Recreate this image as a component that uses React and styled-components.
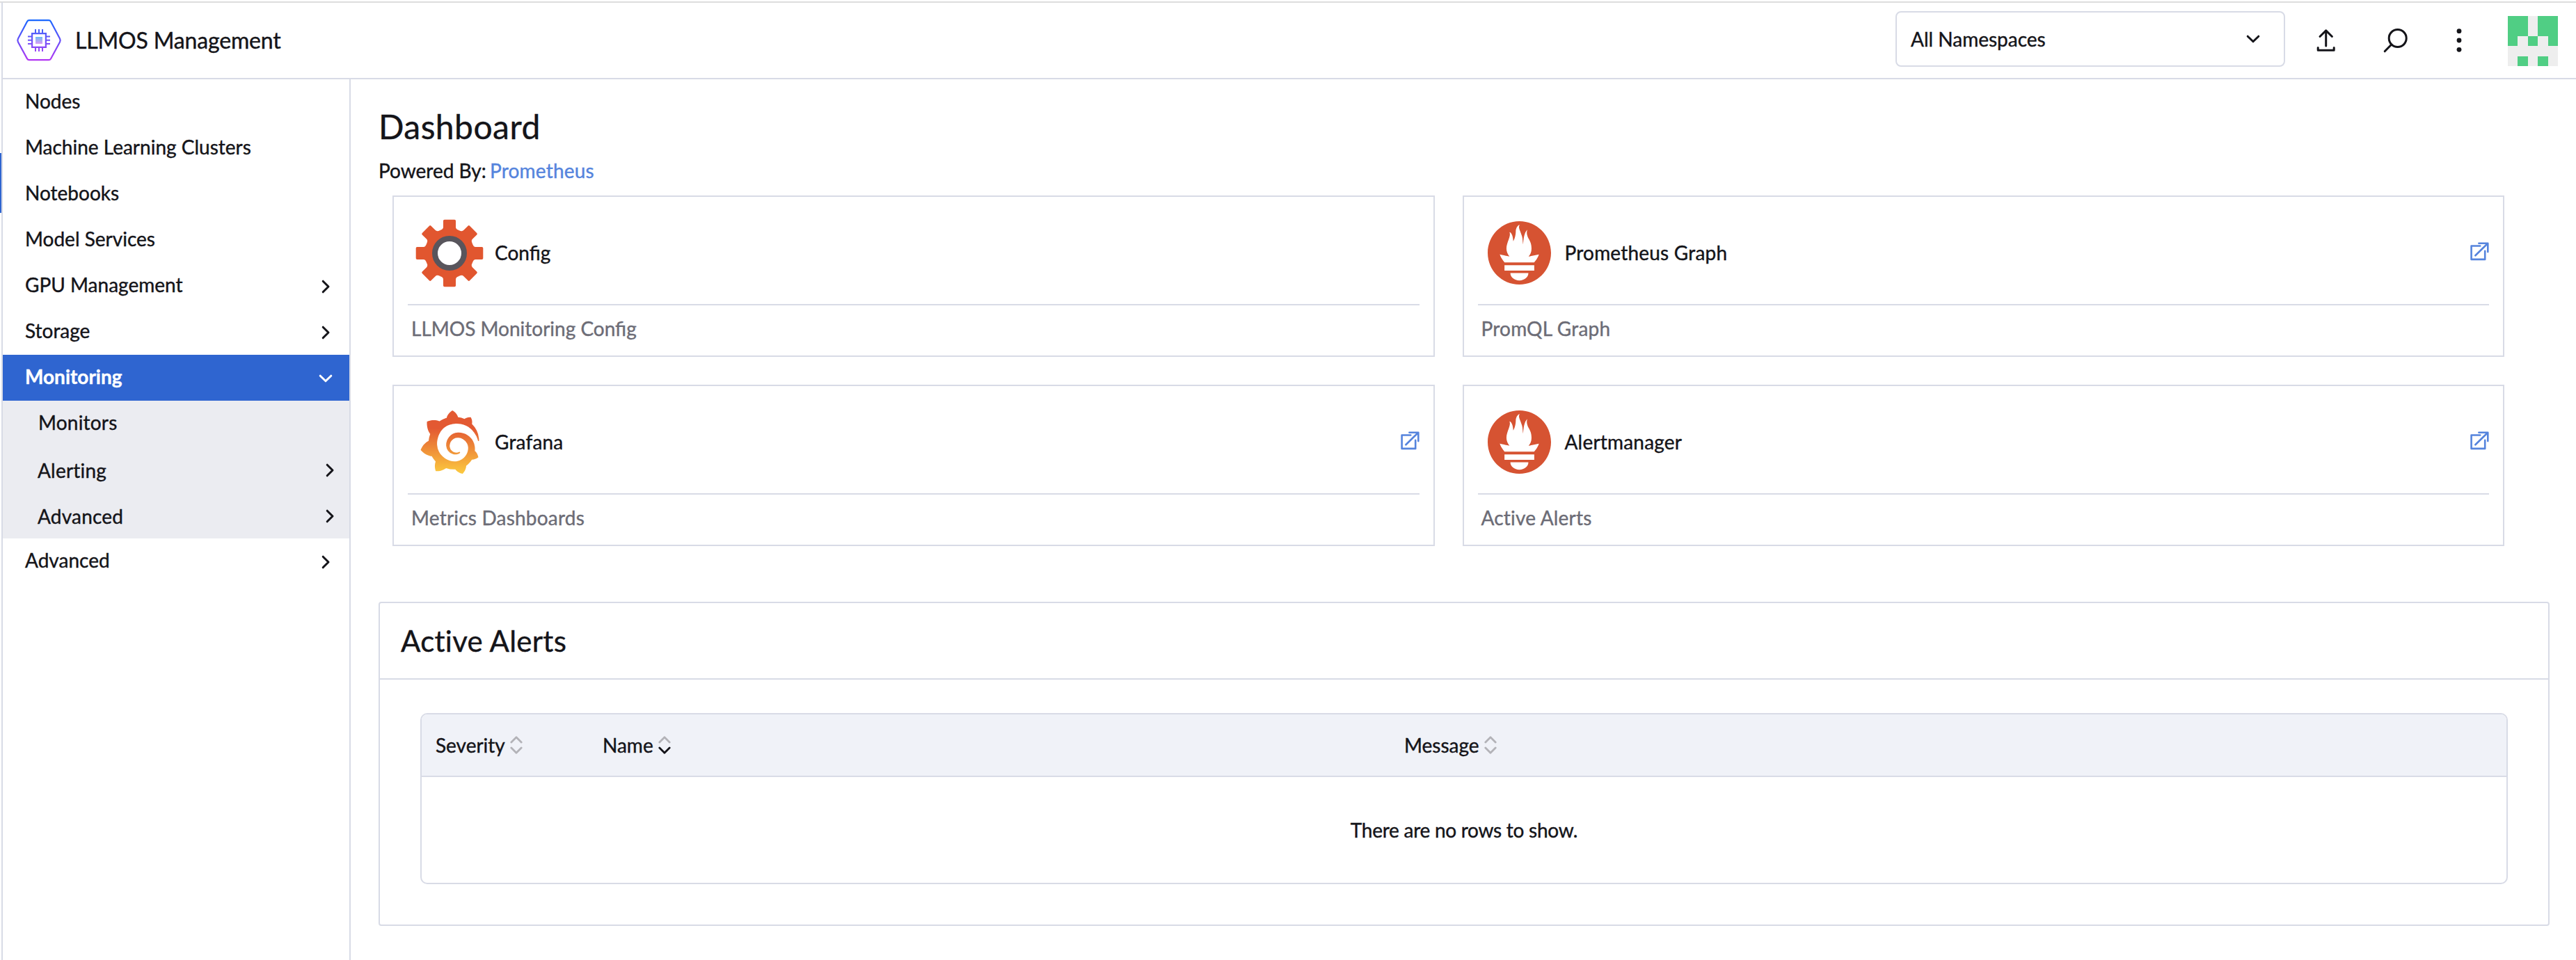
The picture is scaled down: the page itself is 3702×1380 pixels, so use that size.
import React from "react";
import styled, { createGlobalStyle, css } from "styled-components";
import { SiGrafana, SiPrometheus } from "react-icons/si";

const c = {
  text: "#141419",
  muted: "#6c6c76",
  border: "#d8dbe6",
  primary: "#2f65d0",
  link: "#5584dd",
  subnav: "#ebecf1",
  thead: "#f0f2f8",
};

const GlobalStyle = createGlobalStyle`
  *, *::before, *::after { box-sizing: border-box; }
  body {
    margin: 0;
    background: #fff;
    color: ${c.text};
    font-family: Lato, "Liberation Sans", sans-serif;
    font-size: 28px;
    line-height: 34px;
    font-variant-ligatures: none;
    -webkit-text-stroke: 0.4px currentColor;
  }
`;

const Page = styled.div`
  width: 3702px;
  height: 1380px;
  padding-top: 2px;
  display: flex;
  overflow: hidden;
`;
const Rail = styled.div`
  width: 4px;
  border-right: 2px solid ${c.border};
  border-top: 2px solid #dddddd;
  padding-top: 216px;
`;
const RailMarker = styled.div`
  width: 2px;
  height: 86px;
  background: ${c.primary};
`;
const Shell = styled.div`
  flex: 1;
  min-width: 0;
  display: flex;
  flex-direction: column;
  border-top: 2px solid #dddddd;
`;
const Header = styled.header`
  height: 110px;
  flex: none;
  border-bottom: 2px solid ${c.border};
  display: flex;
  align-items: center;
  padding: 0 26px 0 19px;
`;
const Brand = styled.div`
  flex: 1;
  display: flex;
  align-items: center;
  gap: 19px;
  font-size: 32px;
  line-height: 38px;
  letter-spacing: -0.17px;
`;
const Select = styled.div`
  width: 560px;
  height: 80px;
  margin-bottom: 4px;
  border: 2px solid ${c.border};
  border-radius: 8px;
  display: flex;
  align-items: center;
  justify-content: space-between;
  padding: 0 35px 0 20px;
  svg { margin-top: 0; }
`;
const Actions = styled.div`
  display: flex;
  align-items: center;
  height: 100%;
  margin-left: 43px;
  svg { display: block; flex: none; }
`;
const UploadIcon = styled.svg`
  width: 32px;
  height: 40px;
  margin-right: 64px;
`;
const SearchIcon = styled.svg`
  width: 40px;
  height: 40px;
  margin-right: 65px;
`;
const DotsIcon = styled.svg`
  width: 12px;
  height: 40px;
  margin-right: 64px;
`;
const Avatar = styled.div`
  width: 72px;
  height: 72px;
  margin-top: 2px;
  display: grid;
  grid-template-columns: repeat(5, 1fr);
  background: #eeeeee;
`;
const Pixel = styled.i`
  background: ${(p) => (p.$on ? "#50ce84" : "transparent")};
`;

const Body = styled.div`
  flex: 1;
  display: flex;
  min-height: 0;
`;
const Nav = styled.nav`
  width: 500px;
  flex: none;
  border-right: 2px solid ${c.border};
`;
const NavRow = styled.div`
  height: 66px;
  display: flex;
  align-items: center;
  justify-content: space-between;
  padding: 0 25px 0 32px;
  span { padding-bottom: 4px; }
  ${(p) =>
    p.$active &&
    css`
      background: ${c.primary};
      color: #fff;
      font-weight: 700;
    `}
  ${(p) =>
    p.$nested &&
    css`
      padding: 0 19px 0 ${p.$leaf ? 51 : 50}px;
      letter-spacing: 0.2px;
      span { padding-bottom: ${p.$leaf ? 4 : 0}px; padding-top: ${p.$leaf ? 0 : 2}px; }
    `}
`;
const SubNav = styled.div`
  background: ${c.subnav};
`;
const Chevron = styled.svg`
  width: 18px;
  height: 18px;
  display: block;
  overflow: visible;
  fill: none;
  stroke: currentColor;
  stroke-width: 3;
  stroke-linecap: round;
  stroke-linejoin: round;
  margin-top: 2px;
`;

const Main = styled.main`
  flex: 1;
  min-width: 0;
  padding: 39px 38px 0 40px;
`;
const Title = styled.h1`
  margin: 0;
  font-size: 48px;
  line-height: 58px;
  font-weight: 400;
  letter-spacing: 0.45px;
`;
const Powered = styled.div`
  margin-top: 17px;
  height: 53px;
`;
const Link = styled.a`
  color: ${c.link};
  letter-spacing: 0.2px;
  margin-left: -2px;
`;
const Cards = styled.section`
  display: grid;
  grid-template-columns: 1fr 1fr;
  gap: 40px;
  margin: 0 65px 80px 20px;
`;
const CardBox = styled.article`
  height: 232px;
  border: 2px solid ${c.border};
  padding: 0 20px;
  letter-spacing: ${(p) => (p.$ligatures ? "normal" : "0.2px")};
  font-variant-ligatures: ${(p) => (p.$ligatures ? "normal" : "none")};
`;
const CardTop = styled.div`
  height: 156px;
  border-bottom: 2px solid ${c.border};
  display: flex;
  align-items: center;
  padding: 6px 0 0 10px;
`;
const CardIcon = styled.div`
  width: 100px;
  height: 100px;
  display: flex;
  align-items: center;
  justify-content: center;
  padding-top: 1px;
  margin-right: 15px;
  svg { display: block; flex: none; }
`;
const CardName = styled.div`
  flex: 1;
`;
const CardText = styled.div`
  color: ${c.muted};
  padding: 16px 5px;
`;
const ExternalIcon = styled.svg`
  width: 27px;
  height: 27px;
  margin-bottom: 3px;
  fill: none;
  stroke: ${c.link};
  stroke-width: 2.6;
  stroke-linecap: round;
  stroke-linejoin: round;
`;

const Panel = styled.section`
  height: 466px;
  border: 2px solid ${c.border};
  border-radius: 4px;
`;
const PanelTitle = styled.h2`
  margin: 0;
  height: 110px;
  padding: 29px 30px 0;
  border-bottom: 2px solid ${c.border};
  font-size: 42px;
  line-height: 50px;
  font-weight: 400;
  letter-spacing: 0.27px;
`;
const Table = styled.div`
  margin: 48px 58px 0;
  height: 246px;
  border: 2px solid ${c.border};
  border-radius: 10px;
  overflow: hidden;
`;
const TableHead = styled.div`
  height: 90px;
  display: grid;
  grid-template-columns: 240px 1152px 1fr;
  align-items: center;
  background: ${c.thead};
  border-bottom: 2px solid ${c.border};
  padding-left: 20px;
`;
const HeadCell = styled.div`
  display: flex;
  align-items: center;
  gap: 7px;
`;
const SortIcon = styled.svg`
  width: 18px;
  height: 28px;
  fill: none;
  stroke-width: 2.8;
  stroke-linecap: round;
  stroke-linejoin: round;
`;
const EmptyRow = styled.div`
  height: 152px;
  display: flex;
  align-items: center;
  justify-content: center;
  letter-spacing: -0.27px;
`;

const Down = () => (
  <Chevron viewBox="0 0 18 18"><path d="M1.2 5.2 9 12.8l7.8-7.6" /></Chevron>
);
const Right = () => (
  <Chevron viewBox="0 0 18 18"><path d="M5.2 1.2 13 9l-7.8 7.8" /></Chevron>
);

const Logo = () => (
  <svg width="66" height="62" viewBox="23 27 66 62">
    <defs>
      <linearGradient id="hex" x1="0" y1="28" x2="0" y2="88" gradientUnits="userSpaceOnUse">
        <stop offset="0" stopColor="#1768ff" />
        <stop offset="1" stopColor="#b636f2" />
      </linearGradient>
      <linearGradient id="chip" x1="0" y1="42" x2="0" y2="74" gradientUnits="userSpaceOnUse">
        <stop offset="0" stopColor="#4262fb" />
        <stop offset="1" stopColor="#9b45f5" />
      </linearGradient>
      <linearGradient id="core" x1="0" y1="0" x2="0" y2="1">
        <stop offset="0" stopColor="#6fbcf3" />
        <stop offset="1" stopColor="#dc9cf8" />
      </linearGradient>
    </defs>
    <path
      d="M42 29.2h28q2 0 3 1.8l13 24.6q1.3 2.4 0 4.8L73 84.4q-1 1.8-3 1.8H42q-2 0-3-1.8L26 60.4q-1.3-2.4 0-4.8L39 31q1-1.8 3-1.8z"
      fill="none" stroke="url(#hex)" strokeWidth="2.2"
    />
    <g fill="url(#chip)">
      <path fillRule="evenodd" d="M45 47h22v22H45zM47.2 49.2v17.6h17.6V49.2z" />
      <path d="M50 42h2v5h-2zM55 42h2v5h-2zM60 42h2v5h-2zM50 69h2v5h-2zM55 69h2v5h-2zM60 69h2v5h-2zM40 51.4h5v2h-5zM40 56.7h5v2h-5zM40 62h5v2h-5zM67 51.4h5v2h-5zM67 56.7h5v2h-5zM67 62h5v2h-5z" />
    </g>
    <rect x="51" y="53" width="10" height="10" fill="url(#core)" />
  </svg>
);

const TOOTH =
  "M0 0L-13.8-33Q-9-34.2-9-37.5V-46.5Q-9-48.3-7.2-48.3H7.2Q9-48.3 9-46.5V-37.5Q9-34.2 13.8-33Z";
const Gear = () => (
  <svg width="98" height="98" viewBox="-49 -49 98 98">
    <g fill="#e1562f">
      <circle r="34" />
      {[0, 45, 90, 135, 180, 225, 270, 315].map((a) => (
        <path key={a} d={TOOTH} transform={`rotate(${a})`} />
      ))}
    </g>
    <circle r="21" fill="#fff" stroke="#58555c" strokeWidth="8" />
  </svg>
);

const FlameGradient = styled.svg`
  width: 0;
  height: 0;
`;
const GrafanaMark = styled(SiGrafana)`
  && { fill: url(#grafana); }
`;
const Grafana = () => (
  <>
    <FlameGradient>
      <linearGradient id="grafana" x1="0" y1="0" x2="0" y2="1">
        <stop offset="0.28" stopColor="#e35932" />
        <stop offset="1" stopColor="#fcca3f" />
      </linearGradient>
    </FlameGradient>
    <GrafanaMark size={91} />
  </>
);
const Prometheus = () => <SiPrometheus size={91} color="#d65332" />;

const External = () => (
  <ExternalIcon viewBox="0 0 27 27">
    <path d="M14.3 5.5H1.6v19.4h19.6V12.8M12.4 1.7h12.9v12.4M24.8 2.2 7.4 19.3" />
  </ExternalIcon>
);

const Sort = ({ active }) => (
  <SortIcon viewBox="0 0 18 28">
    <path d="M1.8 10 9 2.7l7.2 7.3" stroke="#b3b3b8" />
    <path d="M1.8 18 9 25.3l7.2-7.3" stroke={active ? c.text : "#b3b3b8"} />
  </SortIcon>
);

const topItems = [
  ["Nodes"],
  ["Machine Learning Clusters"],
  ["Notebooks"],
  ["Model Services"],
  ["GPU Management", true],
  ["Storage", true],
];
const cards = [
  { name: "Config", text: "LLMOS Monitoring Config", Icon: Gear, ligatures: true },
  { name: "Prometheus Graph", text: "PromQL Graph", Icon: Prometheus, external: true },
  { name: "Grafana", text: "Metrics Dashboards", Icon: Grafana, external: true },
  { name: "Alertmanager", text: "Active Alerts", Icon: Prometheus, external: true },
];
const avatar = "1101111011101010000001010";

export default function App() {
  return (
    <Page>
      <GlobalStyle />
      <Rail><RailMarker /></Rail>
      <Shell>
        <Header>
          <Brand><Logo /><span>LLMOS Management</span></Brand>
          <Select><span>All Namespaces</span><Down /></Select>
          <Actions>
            <UploadIcon viewBox="0 0 32 40" fill="none" stroke={c.text} strokeWidth="3" strokeLinecap="round" strokeLinejoin="round">
              <path d="M15.7 28V6.5M7 14.5l8.7-8.6 8.7 8.6M4.2 30.5v3.7h23v-3.7" />
            </UploadIcon>
            <SearchIcon viewBox="0 0 40 40" fill="none" stroke={c.text} strokeWidth="3" strokeLinecap="round">
              <circle cx="22.7" cy="17" r="12.5" /><path d="M13.8 26 4.2 35.8" />
            </SearchIcon>
            <DotsIcon viewBox="0 0 12 40" fill={c.text}>
              <circle cx="6" cy="6.7" r="3.4" /><circle cx="6" cy="20" r="3.4" /><circle cx="6" cy="33.3" r="3.4" />
            </DotsIcon>
            <Avatar>
              {[...avatar].map((v, i) => <Pixel key={i} $on={v === "1"} />)}
            </Avatar>
          </Actions>
        </Header>
        <Body>
          <Nav>
            {topItems.map(([label, group]) => (
              <NavRow key={label}><span>{label}</span>{group && <Right />}</NavRow>
            ))}
            <NavRow $active><span>Monitoring</span><Down /></NavRow>
            <SubNav>
              <NavRow $nested $leaf><span>Monitors</span></NavRow>
              <NavRow $nested><span>Alerting</span><Right /></NavRow>
              <NavRow $nested><span>Advanced</span><Right /></NavRow>
            </SubNav>
            <NavRow><span>Advanced</span><Right /></NavRow>
          </Nav>
          <Main>
            <Title>Dashboard</Title>
            <Powered>Powered By: <Link>Prometheus</Link></Powered>
            <Cards>
              {cards.map(({ name, text, Icon, external, ligatures }) => (
                <CardBox key={name} $ligatures={ligatures}>
                  <CardTop>
                    <CardIcon><Icon /></CardIcon>
                    <CardName>{name}</CardName>
                    {external && <External />}
                  </CardTop>
                  <CardText>{text}</CardText>
                </CardBox>
              ))}
            </Cards>
            <Panel>
              <PanelTitle>Active Alerts</PanelTitle>
              <Table>
                <TableHead>
                  <HeadCell>Severity<Sort /></HeadCell>
                  <HeadCell>Name<Sort active /></HeadCell>
                  <HeadCell>Message<Sort /></HeadCell>
                </TableHead>
                <EmptyRow>There are no rows to show.</EmptyRow>
              </Table>
            </Panel>
          </Main>
        </Body>
      </Shell>
    </Page>
  );
}
